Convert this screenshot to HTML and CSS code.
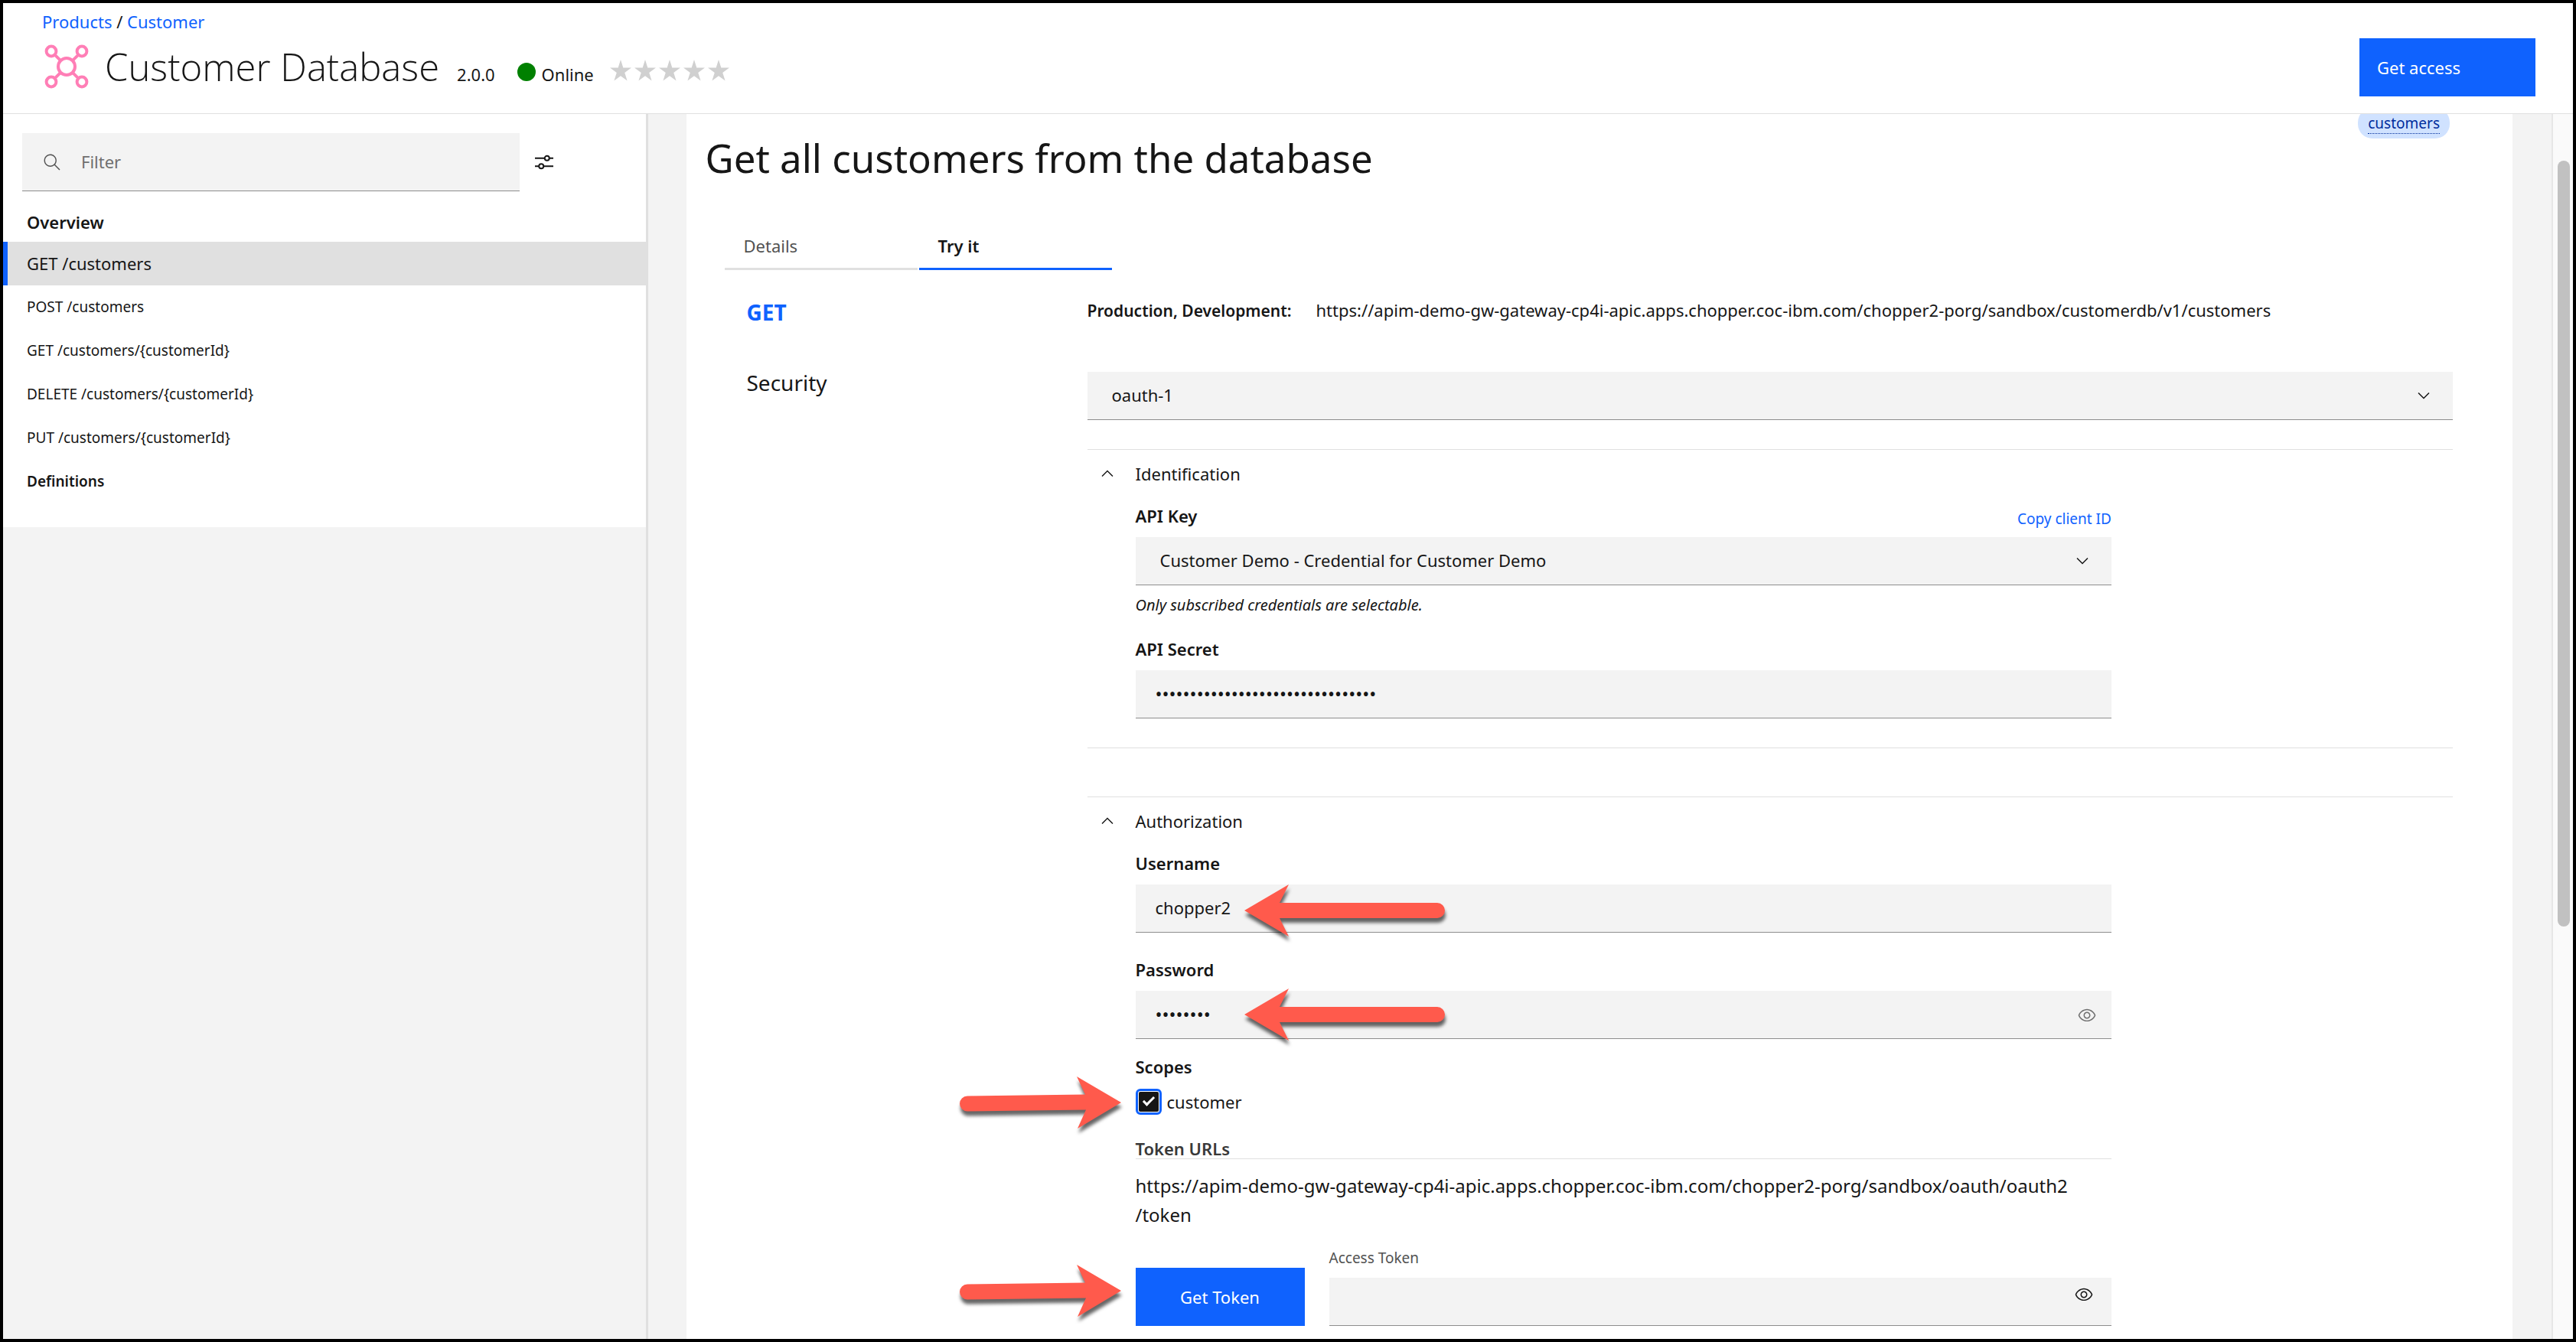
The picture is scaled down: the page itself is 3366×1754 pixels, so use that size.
FILE: index.html
```html
<!DOCTYPE html>
<html lang="en">
<head>
<meta charset="utf-8">
<title>Customer Database</title>
<link rel="stylesheet" href="styles.css">
</head>
<body>
<svg class="defs" aria-hidden="true">
  <symbol id="chevron" viewBox="0 0 16 16"><path d="M8 11L3 6l.7-.7L8 9.600l4.300-4.300.7.7z"/></symbol>
  <symbol id="eye" viewBox="0 0 16 16"><path d="M15.500 7.800C14.300 4.700 11.300 2.600 8 2.500 4.700 2.600 1.700 4.700.5 7.800c0 .1 0 .2 0 .3 1.200 3.100 4.100 5.200 7.500 5.300 3.300-.1 6.300-2.200 7.500-5.300 0-.1 0-.2 0-.3zM8 12.500c-2.700 0-5.400-2-6.500-4.500 1-2.500 3.800-4.500 6.500-4.500s5.400 2 6.500 4.500C13.400 10.500 10.600 12.500 8 12.500z"/><path d="M8 5C6.300 5 5 6.300 5 8s1.300 3 3 3 3-1.300 3-3-1.300-3-3-3zm0 5c-1.100 0-2-.9-2-2s.9-2 2-2 2 .9 2 2-.9 2-2 2z"/></symbol>
  <symbol id="star" viewBox="0 0 16 16"><path d="M8 0l1.900 6H16l-5 3.700 1.900 6L8 12.100l-4.900 3.600L5 9.700 0 6h6.100z"/></symbol>
  <symbol id="arrow-left" viewBox="0 0 262 68"><path d="M0 34L58 0 46 24H252a10 10 0 0 1 0 20H46L58 68z"/></symbol>
  <symbol id="arrow-right" viewBox="0 0 211 68"><path d="M211 34L153 0l11 23.500L10 25.500a10 10 0 0 0 0 20L165 43.500 154 68z"/></symbol>
</svg>

<div class="app">
  <header class="header">
    <div class="header-info">
      <nav class="breadcrumb"><a href="#">Products</a> / <a href="#">Customer</a></nav>
      <div class="title-row">
        <svg class="logo" viewBox="0 0 32 32" fill="none" stroke="#ff7eb6" stroke-width="2" aria-hidden="true">
          <circle cx="16" cy="16" r="5.500"/>
          <circle cx="6" cy="6" r="3.200"/><circle cx="26" cy="6" r="3.200"/>
          <circle cx="6" cy="26" r="3.200"/><circle cx="26" cy="26" r="3.200"/>
          <path d="M8.300 8.300l3.900 3.900M23.700 8.300l-3.900 3.900M8.300 23.700l3.900-3.900M23.700 23.700l-3.900-3.900"/>
        </svg>
        <h1 class="title">Customer Database</h1>
        <span class="version">2.0.0</span>
        <span class="status"><span class="dot"></span>Online</span>
        <span class="stars" role="img" aria-label="Not rated">
          <svg><use href="#star"/></svg><svg><use href="#star"/></svg><svg><use href="#star"/></svg><svg><use href="#star"/></svg><svg><use href="#star"/></svg>
        </span>
      </div>
    </div>
    <button class="btn btn-access" type="button">Get access</button>
  </header>

  <div class="body">
    <aside class="sidebar">
      <div class="sidebar-panel">
        <div class="filter-row">
          <label class="filter">
            <svg viewBox="0 0 16 16" aria-hidden="true"><path d="M15 14.300L10.700 10c1.900-2.300 1.600-5.800-.7-7.700S4.200.7 2.300 3 .7 8.800 3 10.700c2 1.700 5 1.700 7 0l4.300 4.300zM2 6.500C2 4 4 2 6.500 2S11 4 11 6.500 9 11 6.500 11 2 9 2 6.500z"/></svg>
            <input type="text" placeholder="Filter" aria-label="Filter">
          </label>
          <button class="icon-btn" type="button" aria-label="Filter settings">
            <svg viewBox="0 0 16 16" fill="none" stroke="#161616" stroke-width="1.300" aria-hidden="true"><path d="M0 4.500h8.500M12.500 4.500H16M0 11.500h3.500M7.500 11.500H16"/><circle cx="10.500" cy="4.500" r="2"/><circle cx="5.500" cy="11.500" r="2"/></svg>
          </button>
        </div>
        <nav class="nav">
          <a class="nav-item strong large first" href="#">Overview</a>
          <a class="nav-item large active" href="#">GET /customers</a>
          <a class="nav-item" href="#">POST /customers</a>
          <a class="nav-item" href="#">GET /customers/{customerId}</a>
          <a class="nav-item" href="#">DELETE /customers/{customerId}</a>
          <a class="nav-item" href="#">PUT /customers/{customerId}</a>
          <a class="nav-item strong" href="#">Definitions</a>
        </nav>
      </div>
    </aside>

    <main class="content">
      <div class="card">
        <span class="tag"><span>customers</span></span>
        <h2 class="heading">Get all customers from the database</h2>
        <div class="tabs" role="tablist">
          <button class="tab" type="button" role="tab" aria-selected="false">Details</button>
          <button class="tab active" type="button" role="tab" aria-selected="true">Try it</button>
        </div>

        <div class="rows">
          <div class="row-label method">GET</div>
          <p class="endpoint"><b>Production, Development:</b><span>https://apim-demo-gw-gateway-cp4i-apic.apps.chopper.coc-ibm.com/chopper2-porg/sandbox/customerdb/v1/customers</span></p>

          <h3 class="row-label security-label">Security</h3>
          <div class="security">
            <div class="control">
              <select class="select" aria-label="Security"><option>oauth-1</option></select>
              <svg class="chevron"><use href="#chevron"/></svg>
            </div>

            <section class="accordion">
              <button class="accordion-head" type="button" aria-expanded="true"><svg><use href="#chevron"/></svg>Identification</button>
              <div class="fields">
                <div class="label-row"><label class="label" for="key">API Key</label><a class="copy" href="#">Copy client ID</a></div>
                <div class="control">
                  <select class="select" id="key"><option>Customer Demo - Credential for Customer Demo</option></select>
                  <svg class="chevron"><use href="#chevron"/></svg>
                </div>
                <p class="hint">Only subscribed credentials are selectable.</p>
                <label class="label" for="secret">API Secret</label>
                <div class="control"><input class="input" id="secret" type="password" value="12345678901234567890123456789012"></div>
              </div>
            </section>

            <section class="accordion">
              <button class="accordion-head" type="button" aria-expanded="true"><svg><use href="#chevron"/></svg>Authorization</button>
              <div class="fields">
                <label class="label" for="user">Username</label>
                <div class="control"><input class="input" id="user" type="text" value="chopper2"><svg class="arrow arrow-left"><use href="#arrow-left"/></svg></div>
                <label class="label label-next" for="pass">Password</label>
                <div class="control">
                  <input class="input" id="pass" type="password" value="12345678">
                  <button class="eye muted" type="button" aria-label="Show password"><svg><use href="#eye"/></svg></button>
                  <svg class="arrow arrow-left arrow-password"><use href="#arrow-left"/></svg>
                </div>
                <div class="label label-scopes">Scopes</div>
                <div class="scope">
                  <input class="check" id="scope" type="checkbox" checked>
                  <label for="scope">customer</label>
                  <svg class="arrow arrow-right"><use href="#arrow-right"/></svg>
                </div>
                <div class="token-label">Token URLs</div>
                <p class="token-url">https://apim-demo-gw-gateway-cp4i-apic.apps.chopper.coc-ibm.com/chopper2-porg/sandbox/oauth/oauth2<br>/token</p>
                <div class="token-row">
                  <button class="btn btn-token" type="button">Get Token</button>
                  <div class="token-field">
                    <label for="token">Access Token</label>
                    <div class="control">
                      <input class="input" id="token" type="text">
                      <button class="eye high" type="button" aria-label="Show token"><svg><use href="#eye"/></svg></button>
                    </div>
                  </div>
                  <svg class="arrow arrow-right"><use href="#arrow-right"/></svg>
                </div>
              </div>
            </section>
          </div>
        </div>
      </div>
    </main>
    <div class="scroll-track"><div class="scroll-thumb"></div></div>
  </div>
</div>
</body>
</html>
```
FILE: styles.css
```css
*, *::before, *::after { box-sizing: border-box; }

body {
  margin: 0;
  font: 22px/28px "Noto Sans", "Open Sans", sans-serif;
  color: #161616;
}

h1, h2, h3, p { margin: 0; }
a { color: #0f62fe; text-decoration: none; }
button, input, select { font: inherit; color: inherit; border: 0; border-radius: 0; }
button { padding: 0; background: none; text-align: left; }
svg { display: block; fill: currentColor; }
.defs { display: none; }

.app {
  display: flex;
  flex-direction: column;
  height: 100vh;
  border: 4px solid #000;
  background: #fff;
  overflow: hidden;
}

/* Header */
.header {
  display: flex;
  justify-content: space-between;
  align-items: flex-end;
  flex: none;
  padding: 10px 49px 22px 51px;
  border-bottom: 1px solid #e0e0e0;
}
.header-info { padding-bottom: 7px; }
.title-row { display: flex; align-items: baseline; margin-top: 13px; }
.logo { align-self: center; width: 64px; height: 64px; margin-right: 18px; fill: none; }
.title { font-family: "Open Sans", sans-serif; font-size: 49px; font-weight: 300; line-height: 64px; }
.version { margin-left: 23px; }
.status { margin-left: 29px; }
.dot { display: inline-block; width: 24px; height: 24px; margin-right: 8px; border-radius: 50%; background: #008000; }
.stars { display: flex; margin-left: 19px; color: #d0d0d0; }
.stars svg { width: 32px; height: 28px; margin-bottom: 1px; }

.btn { height: 76px; background: #0f62fe; color: #fff; }
.btn-access { width: 230px; padding-left: 23px; }

/* Sidebar */
.body { display: flex; flex: 1; min-height: 0; background: #f3f3f3; }
.sidebar { flex: 0 0 25%; border-right: 3px solid #e0e0e0; box-sizing: content-box; }
.sidebar-panel { padding: 25px 0 31px; background: #fff; }
.filter-row { display: flex; align-items: center; padding: 0 121px 15px 25px; }
.filter {
  display: flex;
  flex: 1;
  align-items: center;
  height: 76px;
  padding-left: 27px;
  background: #f3f3f3;
  border-bottom: 1px solid #8d8d8d;
}
.filter svg { width: 24px; height: 24px; fill: #525252; }
.filter input { flex: 1; min-width: 0; margin-left: 26px; padding: 0 0 2px; background: none; }
.filter input::placeholder { color: #6f6f6f; opacity: 1; }
.icon-btn { margin-left: 20px; }
.icon-btn svg { width: 24px; height: 24px; fill: none; }

.nav-item {
  display: block;
  height: 57px;
  padding-left: 31px;
  color: #161616;
  font-size: 19px;
  line-height: 57px;
}
.nav-item.large { font-size: 22px; }
.nav-item.strong { font-weight: 600; }
.nav-item.first { height: 51px; line-height: 51px; }
.nav-item.active { padding-left: 25px; border-left: 6px solid #0f62fe; background: #e0e0e0; }

/* Content */
.content { flex: 1; min-width: 0; padding: 0 51px 0 50px; overflow: hidden; }
.card { position: relative; min-height: 100%; padding: 24px 78px 16px 25px; background: #fff; }
.tag {
  position: absolute;
  top: -8px;
  right: 82px;
  padding: 6px 13px;
  border-radius: 19px;
  background: #d0e2ff;
  color: #002d9c;
  font-size: 19px;
}
.tag span { border-bottom: 1px dotted #002d9c; }
.heading { font-size: 51px; font-weight: 400; line-height: 66px; }
.tabs { display: flex; gap: 2px; margin: 52px 0 0 25px; }
.tab {
  width: 252px;
  height: 62px;
  padding: 0 25px;
  border-bottom: 3px solid #e0e0e0;
  color: #525252;
}
.tab.active { border-color: #0f62fe; color: #161616; font-weight: 600; }

.rows { display: grid; grid-template-columns: 445px 1fr; margin: 35px 0 0 54px; row-gap: 50px; }
.row-label { font-size: 28px; font-weight: 400; line-height: 40px; }
.row-label.method { color: #0f62fe; font-weight: 700; }
.security-label { padding-top: 2px; }
.endpoint { line-height: 34px; }
.endpoint b { font-size: 21px; font-weight: 600; }
.endpoint span { margin-left: 32px; }

.security { padding-top: 8px; }
.control { position: relative; }
.select, .input {
  display: block;
  width: 100%;
  height: 63px;
  padding: 0 80px 2px 32px;
  border-bottom: 1px solid #8d8d8d;
  background: #f3f3f3;
  appearance: none;
}
.input { padding-left: 26px; }
.input[type="password"] { font-size: 24px; }
.chevron { position: absolute; top: 19px; right: 26px; width: 24px; height: 24px; }

.accordion { margin-top: 38px; padding-bottom: 38px; border-top: 1px solid #e0e0e0; }
.accordion + .accordion { margin-top: 0; }
.accordion:first-of-type { border-bottom: 1px solid #e0e0e0; margin-bottom: 63px; }
.accordion-head { display: flex; align-items: center; width: 100%; padding: 17px 0 27px 14px; }
.accordion-head svg { width: 24px; height: 24px; margin-right: 25px; transform: rotate(180deg); }
.fields { width: calc(75% - 63px); margin-left: 63px; }

.label { display: block; margin-bottom: 14px; font-weight: 600; }
.label-row { display: flex; justify-content: space-between; }
.copy { padding-top: 4px; font-size: 19px; }
.hint { margin: 12px 0 29px; font-size: 20px; font-style: italic; }
.label-next { margin-top: 34px; }
.label-scopes { margin: 22px 0 15px; }

.eye { position: absolute; top: 20px; right: 19px; }
.eye svg { width: 26px; height: 24px; }
.eye.muted { color: #6f6f6f; }
.eye.high { top: 10px; right: 23px; }

.scope { position: relative; display: flex; align-items: center; gap: 7px; height: 34px; }
.check {
  width: 26px;
  height: 26px;
  margin: 0 4px;
  border-radius: 2px;
  outline: 3px solid #0f62fe;
  outline-offset: 1px;
  background: #161616;
  appearance: none;
}
.check:checked::before {
  content: "";
  display: block;
  width: 8px;
  height: 15px;
  margin: 3px auto 0;
  border: solid #fff;
  border-width: 0 3px 3px 0;
  transform: rotate(45deg);
}
.token-label { margin-top: 32px; border-bottom: 1px solid #e0e0e0; color: #393939; font-weight: 600; line-height: 25px; }
.token-url { margin-top: 16px; font-size: 24px; line-height: 38px; }
.token-row { position: relative; display: flex; align-items: flex-end; gap: 32px; margin-top: 23px; }
.btn-token { width: 221px; text-align: center; }
.token-field { flex: 1; }
.token-field label { display: block; margin-bottom: 12px; color: #525252; font-size: 19px; }

/* Callout arrows */
.arrow { position: absolute; overflow: visible; color: #ff5a4c; filter: drop-shadow(1px 6px 2px rgba(0, 0, 0, .6)); pointer-events: none; }
.arrow-left { left: 142px; top: 0; width: 262px; height: 68px; }
.arrow-password { top: -3px; }
.arrow-right { right: calc(100% + 19px); bottom: -18px; width: 211px; height: 68px; }
.token-row .arrow-right { bottom: 12px; }

/* Scrollbar */
.scroll-track { flex: 0 0 28px; padding: 61px 4px 0 6px; border-left: 2px solid #e6e6e6; background: #fafafa; }
.scroll-thumb { height: 65%; border-radius: 8px; background: #c1c1c1; }
```
